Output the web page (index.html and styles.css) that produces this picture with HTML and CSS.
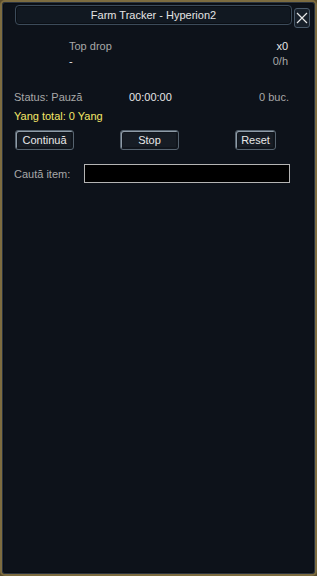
FILE: index.html
```html
<!DOCTYPE html>
<html lang="ro">
  <head>
    <meta charset="UTF-8" />
    <meta name="viewport" content="width=device-width, initial-scale=1.0" />
    <title>Farm Tracker</title>
    <link rel="stylesheet" href="styles.css">
  </head>

  <body>
    <div class="window">
      <div class="header">
        <div class="titlebar">Farm Tracker - Hyperion2</div>
        <div class="close">
          <svg width="12" height="12" viewBox="0 0 12 12">
            <path d="M1 1 L11 11 M11 1 L1 11" stroke="#e8e8e8" stroke-width="1.2" fill="none" />
          </svg>
        </div>
      </div>

      <div class="drop">
        <div class="droprow"><span>Top drop</span><span class="bright">x0</span></div>
        <div class="droprow"><span class="bright">-</span><span>0/h</span></div>
      </div>

      <div class="status">
        <span class="label">Status: Pauză</span>
        <span class="timer">00:00:00</span>
        <span class="count">0 buc.</span>
      </div>

      <div class="yang">Yang total: 0 Yang</div>

      <div class="buttons">
        <button class="btn wide">Continuă</button>
        <button class="btn wide">Stop</button>
        <button class="btn small">Reset</button>
      </div>

      <div class="search">
        <span class="label">Caută item:</span>
        <input type="text" class="searchinput" />
      </div>
    </div>
  </body>
</html>
```

FILE: styles.css
```css
body {
  margin: 0;
  background-color: #5c4e2c;
  font-family: "Liberation Sans", Arial, sans-serif;
  font-size: 11px;
  color: #c8c8c8;
}

.window {
  box-sizing: border-box;
  width: 317px;
  height: 576px;
  border: 2px solid #7d6c40;
  border-radius: 5px;
  background-color: #0d121a;
  box-shadow: inset 0 0 0 1px #2b3440, inset 0 0 0 2px #0a0d12;
  padding: 0 12px;
}

.header {
  display: flex;
  align-items: flex-start;
  gap: 2px;
  margin-top: 3px;
  margin-left: 1px;
  margin-right: -7px;
}

.titlebar {
  flex: 1;
  height: 18px;
  line-height: 18px;
  text-align: center;
  color: #e4e4e4;
  background-color: #111821;
  border: 1px solid #3c4b5a;
  border-radius: 4px;
  box-shadow: inset 0 0 0 1px #0a0e14;
}

.close {
  width: 14px;
  height: 18px;
  margin-top: 3px;
  display: flex;
  align-items: center;
  justify-content: center;
  border: 1px solid #4a5a6a;
  border-radius: 3px;
  background-color: #18202a;
}

.drop {
  margin: 11px 15px 0 55px;
}

.droprow {
  display: flex;
  justify-content: space-between;
  line-height: 15px;
  color: #a8a8a8;
}

.bright {
  color: #e6e6e6;
}

.status {
  display: flex;
  margin-top: 21px;
  margin-right: 14px;
  line-height: 15px;
}

.status .label {
  width: 115px;
  color: #a8a8a8;
}

.timer {
  color: #e6e6e6;
}

.count {
  margin-left: auto;
  color: #a8a8a8;
}

.yang {
  margin-top: 4px;
  line-height: 15px;
  color: #f4e868;
}

.buttons {
  display: flex;
  margin-top: 6px;
  margin-left: 1px;
}

.btn {
  height: 20px;
  padding: 0;
  font-family: "Liberation Sans", Arial, sans-serif;
  font-size: 11px;
  color: #e8e8e8;
  background-color: #161c24;
  border: 1px solid #56636f;
  border-radius: 3px;
  box-shadow: inset 1px 1px 0 #8f9ca8, inset 0 0 0 2px #10151c;
}

.wide {
  width: 59px;
  margin-right: 46px;
}

.wide + .wide {
  margin-right: 56px;
}

.small {
  width: 41px;
}

.search {
  display: flex;
  align-items: center;
  margin-top: 14px;
}

.search .label {
  width: 70px;
  color: #a8a8a8;
}

.searchinput {
  box-sizing: border-box;
  width: 206px;
  height: 19px;
  background-color: #000;
  border: 1px solid #b4b4b4;
  color: #fff;
  outline: none;
}
```
